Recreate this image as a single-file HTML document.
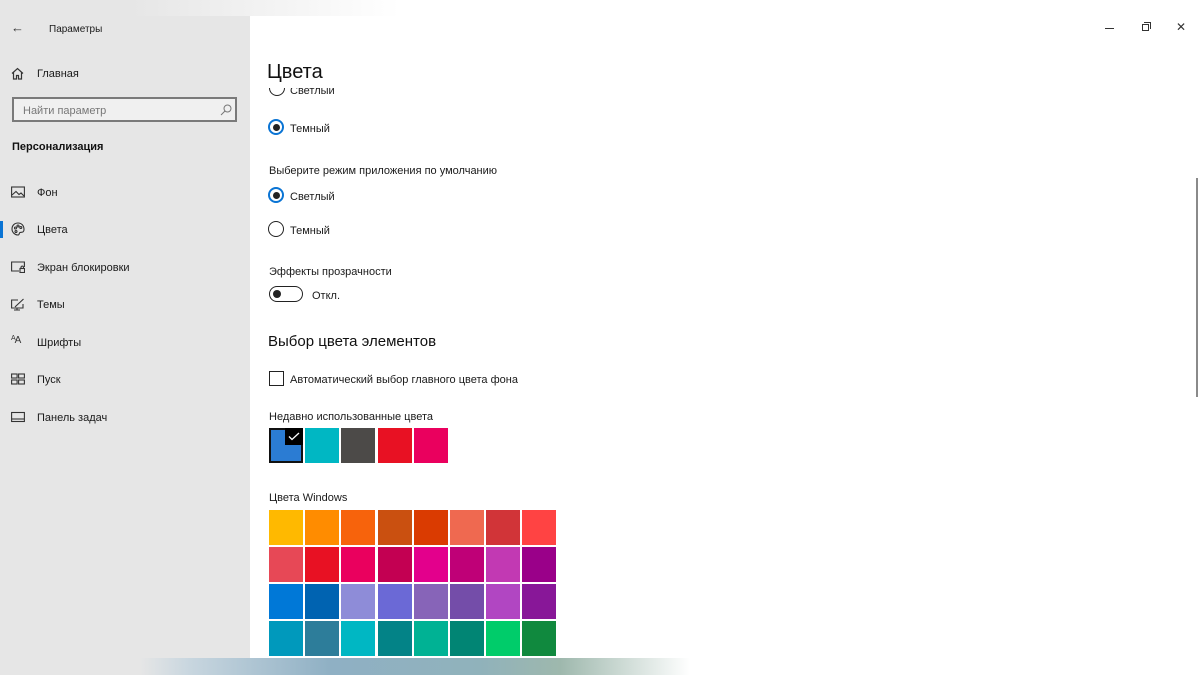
<!DOCTYPE html>
<html><head><meta charset="utf-8"><style>
*{margin:0;padding:0;box-sizing:border-box}
html,body{width:1200px;height:675px;overflow:hidden}
body{background:#fff;font-family:"Liberation Sans","Noto Sans CJK SC",sans-serif;color:#000;position:relative}
.a{position:absolute;white-space:nowrap}
#side{position:absolute;left:0;top:0;width:250px;height:675px;background:#e6e6e6}
#topstrip{position:absolute;left:0;top:0;width:420px;height:16px;background:linear-gradient(90deg,#e6e6e6 0,#e6e6e6 130px,#fff 400px)}
.nav{font-size:11px;color:#1a1a1a}
.ic{position:absolute;left:11px;width:14px;height:12px}
.radio{position:absolute;width:16px;height:16px;border-radius:50%;border:1.6px solid #222}
.radio.on{border:2px solid #0a74d4}
.radio.on:after{content:"";position:absolute;left:3px;top:3px;width:7px;height:7px;border-radius:50%;background:#222}
.t{font-size:11px;color:#1a1a1a}
.sw{position:absolute;width:34px;height:35px}
#grid{position:absolute;left:0;top:0;width:1200px;height:675px;overflow:hidden}
</style></head><body>
<div id="side"></div>
<div id="topstrip"></div>
<div class="a" style="left:11px;top:20px;font-size:13px;color:#333">←</div>
<div class="a nav" style="left:49px;top:24px;font-size:10px">Параметры</div>

<svg class="a" style="left:11px;top:67px" width="13" height="13" viewBox="0 0 13 13" fill="none" stroke="#333" stroke-width="1.2"><path d="M1 6.5L6.5 1.5L12 6.5M2.5 5.5V12H5.5V8.5H7.5V12H10.5V5.5"/></svg>
<div class="a nav" style="left:37px;top:68px">Главная</div>

<div class="a" style="left:12px;top:97px;width:225px;height:25px;border:2px solid #7a7a7a;background:#f0f0f0"></div>
<div class="a" style="left:23px;top:105px;font-size:11px;color:#777">Найти параметр</div>
<svg class="a" style="left:220px;top:104px" width="12" height="12" viewBox="0 0 12 12" fill="none" stroke="#777" stroke-width="1"><circle cx="7.5" cy="4.5" r="3.5"/><path d="M5 7L1 11"/></svg>

<div class="a" style="left:12px;top:141px;font-size:11px;font-weight:bold;color:#111">Персонализация</div>

<div class="a" style="left:0;top:221px;width:3px;height:17px;background:#0a74d4"></div>

<svg class="ic" style="top:186px" viewBox="0 0 14 12" fill="none" stroke="#333" stroke-width="1.1"><rect x="0.6" y="1" width="12.8" height="10"/><path d="M1 9L5 5.5L8 8.5L10 7L13 10"/></svg>
<div class="a nav" style="left:37px;top:187px">Фон</div>
<svg class="ic" style="top:222px;height:14px" viewBox="0 0 14 14" fill="none" stroke="#333" stroke-width="1.1"><path d="M7 1C3.5 1 1 3.5 1 7C1 10.5 4 13 7 13C8.5 13 8 11 9 10.5C10.5 10 13 11 13 7.5C13 3.5 10.5 1 7 1Z"/><circle cx="4.5" cy="6" r="1"/><circle cx="7" cy="4" r="1"/><circle cx="9.8" cy="5.5" r="1"/><circle cx="5" cy="9.5" r="1"/></svg>
<div class="a nav" style="left:37px;top:224px">Цвета</div>
<svg class="ic" style="top:261px" viewBox="0 0 14 12" fill="none" stroke="#333" stroke-width="1.1"><path d="M8 10H0.6V1H13.4V6"/><rect x="9" y="7.5" width="4.5" height="4"/><path d="M10 7.5V6A1.3 1.3 0 0 1 12.5 6V7.5"/></svg>
<div class="a nav" style="left:37px;top:262px">Экран блокировки</div>
<svg class="ic" style="top:298px;height:13px" viewBox="0 0 14 13" fill="none" stroke="#333" stroke-width="1.1"><path d="M7 2H0.6V10H12V6M3 12H9M6 10V12"/><path d="M5 8L12.5 1M5 8L4 9"/></svg>
<div class="a nav" style="left:37px;top:299px">Темы</div>
<div class="a" style="left:11px;top:335px;font-size:10px;color:#333;letter-spacing:-1px"><span style="font-size:7px;vertical-align:3px">A</span>A</div>
<div class="a nav" style="left:37px;top:337px">Шрифты</div>
<svg class="ic" style="top:373px" viewBox="0 0 14 12" fill="none" stroke="#333" stroke-width="1.1"><rect x="0.6" y="1" width="5.5" height="4"/><rect x="7.6" y="1" width="5.8" height="4"/><rect x="0.6" y="7" width="5.5" height="4"/><rect x="7.6" y="7" width="5.8" height="4"/></svg>
<div class="a nav" style="left:37px;top:374px">Пуск</div>
<svg class="ic" style="top:411px" viewBox="0 0 14 12" fill="none" stroke="#333" stroke-width="1.1"><rect x="0.6" y="1.5" width="12.8" height="9"/><path d="M0.6 8H13.4"/></svg>
<div class="a nav" style="left:37px;top:412px">Панель задач</div>

<!-- window controls -->
<div class="a" style="left:1105px;top:28px;width:9px;height:1px;background:#333"></div>
<div class="a" style="left:1142px;top:24px;width:7px;height:7px;border:1px solid #333"></div>
<div class="a" style="left:1144px;top:22px;width:7px;height:7px;border-top:1px solid #333;border-right:1px solid #333"></div>
<div class="a" style="left:1176px;top:20px;font-size:12px;color:#333">✕</div>
<div class="a" style="left:1196px;top:178px;width:2px;height:219px;background:#8a8a8a"></div>

<!-- content -->
<div class="a" style="left:267px;top:61px;font-size:20px;color:#111">Цвета</div>
<div class="a" style="left:268px;top:88px;width:20px;height:8px;overflow:hidden"><div class="radio" style="left:1px;top:-8px"></div></div>
<div class="a t" style="left:290px;top:88px;height:9px;overflow:hidden"><span style="display:block;margin-top:-4px;line-height:14px">Светлый</span></div>

<div class="radio on" style="left:268px;top:119px"></div>
<div class="a t" style="left:290px;top:123px">Темный</div>

<div class="a t" style="left:269px;top:165px">Выберите режим приложения по умолчанию</div>
<div class="radio on" style="left:268px;top:187px"></div>
<div class="a t" style="left:290px;top:191px">Светлый</div>
<div class="radio" style="left:268px;top:221px"></div>
<div class="a t" style="left:290px;top:225px">Темный</div>

<div class="a t" style="left:269px;top:266px">Эффекты прозрачности</div>
<div class="a" style="left:269px;top:286px;width:34px;height:16px;border:1.6px solid #222;border-radius:8px"></div>
<div class="a" style="left:273px;top:290px;width:8px;height:8px;border-radius:50%;background:#222"></div>
<div class="a t" style="left:312px;top:290px">Откл.</div>

<div class="a" style="left:268px;top:333px;font-size:15px;color:#111">Выбор цвета элементов</div>
<div class="a" style="left:269px;top:371px;width:15px;height:15px;border:1.6px solid #222"></div>
<div class="a t" style="left:290px;top:374px">Автоматический выбор главного цвета фона</div>

<div class="a t" style="left:269px;top:411px">Недавно использованные цвета</div>
<div class="sw" style="left:269px;top:428px;background:#2b7cd3;border:2px solid #111"></div>
<div class="a" style="left:285px;top:428px;width:18px;height:17px;background:#000"></div>
<svg class="a" style="left:288px;top:432px" width="12" height="9" viewBox="0 0 12 9" fill="none" stroke="#fff" stroke-width="1.3"><path d="M1 4.5L4 7.5L11 1"/></svg>
<div class="sw" style="left:305px;top:428px;background:#00b7c3"></div>
<div class="sw" style="left:341px;top:428px;background:#4c4a48"></div>
<div class="sw" style="left:378px;top:428px;background:#e81123"></div>
<div class="sw" style="left:414px;top:428px;background:#ea005e"></div>

<div class="a t" style="left:269px;top:492px">Цвета Windows</div>
<div id="grid"></div>
<div class="a" style="left:0;top:658px;width:1200px;height:17px;background:linear-gradient(90deg,rgba(255,255,255,0) 0,rgba(255,255,255,0) 140px,#c8d6df 190px,#8fb0c4 330px,#90b2bb 480px,#9eb8ad 560px,#fff 690px,#fff 1200px)"></div>
<script>
var c=["#ffb900","#ff8c00","#f7630c","#ca5010","#da3b01","#ef6950","#d13438","#ff4343",
"#e74856","#e81123","#ea005e","#c30052","#e3008c","#bf0077","#c239b3","#9a0089",
"#0078d7","#0063b1","#8e8cd8","#6b69d6","#8764b8","#744da9","#b146c2","#881798",
"#0099bc","#2d7d9a","#00b7c3","#038387","#00b294","#018574","#00cc6a","#10893e"];
var xs=[269,305,341,378,414,450,486,522],h="";
for(var i=0;i<32;i++){var r=Math.floor(i/8),k=i%8;h+='<div class="sw" style="left:'+xs[k]+'px;top:'+(510+r*37)+'px;background:'+c[i]+'"></div>';}
document.getElementById("grid").innerHTML=h;
</script>
</body></html>
